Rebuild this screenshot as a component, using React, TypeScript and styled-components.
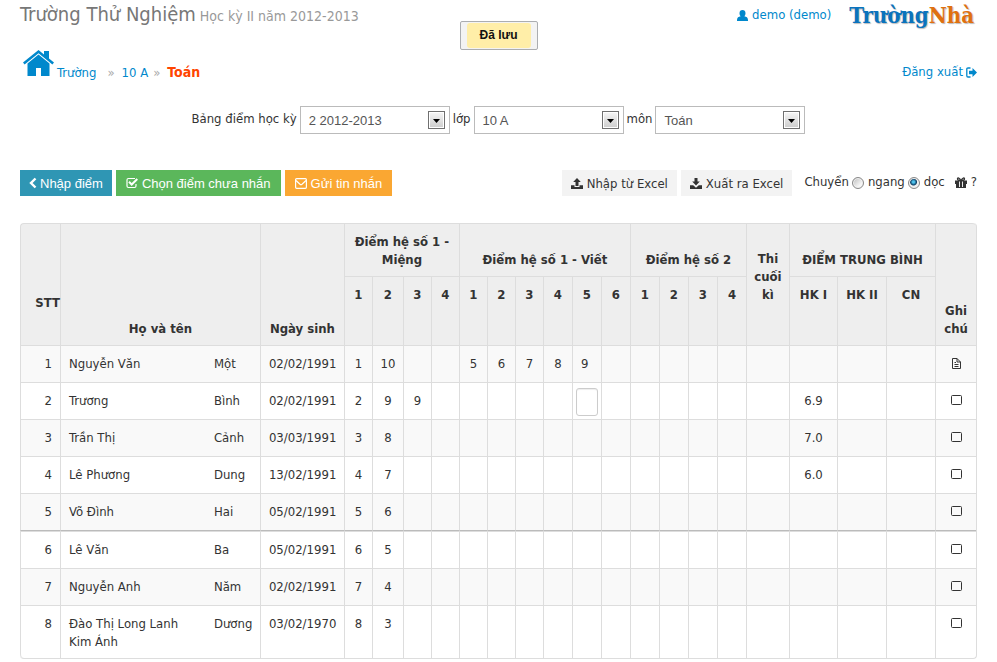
import React, { useId } from "react";
import styled, { createGlobalStyle, css } from "styled-components";

const UI = `"DejaVu Sans Condensed", "Noto Sans", sans-serif`;
const ARIAL = `"Liberation Sans", sans-serif`;

const GlobalStyle = createGlobalStyle`
  * { box-sizing: border-box; }
  body {
    margin: 0;
    background: #fff;
    color: #333;
    font: 13px/18px ${UI};
  }
`;

const Page = styled.div`
  position: relative;
  padding: 0 20px 3px;
`;

const Header = styled.header`
  display: flex;
  justify-content: space-between;
  align-items: flex-start;
  height: 46px;
`;

const Title = styled.h1`
  margin: 0;
  font-size: 20px;
  font-weight: 400;
  line-height: 28px;
  color: #777;
  white-space: nowrap;
`;

const Term = styled.small`
  margin-left: 4px;
  font-size: 14px;
  color: #999;
`;

const Account = styled.div`
  display: flex;
  align-items: center;
  gap: 18px;
  height: 30px;
  padding-right: 3px;
`;

const Link = styled.a`
  display: inline-flex;
  align-items: center;
  gap: 4px;
  color: #0088cc;
  text-decoration: none;
`;

const Logo = styled.a`
  font: bold 22px/28px "DejaVu Serif Condensed", "Liberation Serif", serif;
  color: #0a73bd;
  text-decoration: none;
  text-shadow: 1px 1px 1px #bbb;
  span { color: #e0700f; }
`;

const Toast = styled.div`
  position: absolute;
  top: 21px;
  left: 50%;
  transform: translateX(-50%);
  padding: 1px 6px;
  border: 1px solid #abadb0;
  border-radius: 2px;
  background: #f3f3f3;
`;

const ToastText = styled.div`
  width: 64px;
  border-radius: 3px;
  background: #ffeea8;
  color: #111;
  text-align: center;
  font: bold 12px/25px ${ARIAL};
`;

const NavRow = styled.div`
  display: flex;
  justify-content: space-between;
  height: 60px;
`;

const Crumbs = styled.nav`
  display: flex;
  align-items: flex-start;
  padding: 4px 0 0 3px;
  line-height: 18px;
`;

const Home = styled(Link)`
  margin-right: 3px;
`;

const Crumb = styled(Link)`
  margin-top: 14px;
`;

const Separator = styled.span`
  margin: 14px 7px 0 11px;
  color: #aaa;
  &:last-of-type { margin-left: 5px; margin-right: 7px; }
`;

const Current = styled.strong`
  margin-top: 13px;
  font-size: 14px;
  color: #ff4500;
`;

const SignOut = styled(Link)`
  align-self: flex-start;
  margin-top: 17px;
  gap: 3px;
`;

const Filters = styled.form`
  display: flex;
  justify-content: center;
  gap: 3px;
  height: 28px;
`;

const FilterLabel = styled.label`
  display: flex;
  gap: 3px;
  line-height: 26px;
`;

const SelectBox = styled.span`
  display: grid;
  width: 150px;
  height: 28px;
  > * { grid-area: 1 / 1; }
`;

const Select = styled.select`
  appearance: none;
  height: 28px;
  padding: 0 24px 0 8px;
  border: 1px solid #bbb;
  border-radius: 0;
  background: #fff;
  color: #555;
  font: 13px ${ARIAL};
`;

const Arrow = styled.svg`
  justify-self: end;
  align-self: center;
  margin-right: 5px;
  pointer-events: none;
`;

const Toolbar = styled.div`
  display: flex;
  justify-content: space-between;
  margin: 36px 0 27px;
  height: 26px;
`;

const Group = styled.div`
  display: flex;
  gap: 4px;
`;

const Button = styled.button<{ $bg: string; $plain?: boolean }>`
  display: flex;
  align-items: center;
  justify-content: center;
  gap: 4px;
  padding: 0 ${(p) => (p.$plain ? 9 : 10)}px;
  border: 0;
  background: ${(p) => p.$bg};
  color: ${(p) => (p.$plain ? "#333" : "#fff")};
  font: 13px ${(p) => (p.$plain ? UI : ARIAL)};
  white-space: nowrap;
`;

const BackButton = styled(Button)`
  gap: 3px;
  padding: 0 9px;
`;

const Direction = styled.fieldset`
  display: flex;
  align-items: center;
  height: 24px;
  margin: 0 0 0 8px;
  padding: 0;
  border: 0;
`;

const RadioLabel = styled.label`
  display: flex;
  align-items: center;
  gap: 4px;
  margin-left: 3px;
`;

const Radio = styled.input`
  appearance: none;
  width: 12px;
  height: 12px;
  margin: 2px 0 0;
  border: 1px solid #888;
  border-radius: 50%;
  background: linear-gradient(135deg, #bbb, #f6f6f6 70%);
  box-shadow: inset 0 0 0 1px #f2f2f2;
  &:checked {
    background: radial-gradient(circle at 45% 40%, #4fc4ee 0 1px, #0d3f66 3px, #eee 4px);
  }
`;

const Help = styled.a`
  display: flex;
  align-items: center;
  gap: 4px;
  margin-left: 10px;
  color: #333;
  text-decoration: none;
`;

const Grid = styled.table`
  width: 100%;
  table-layout: fixed;
  border-collapse: separate;
  border-spacing: 0;
  border: 1px solid #ddd;
  border-left: 0;
  border-top: 0;
  border-radius: 4px;
`;

const Col = styled.col<{ $w?: number }>`
  ${(p) => p.$w && css`width: ${p.$w}px;`}
`;

const Th = styled.th<{ $pb?: number; $top?: boolean; $h?: number }>`
  height: ${(p) => p.$h ?? 53}px;
  padding: 9px 8px ${(p) => p.$pb ?? 7}px;
  border-left: 1px solid #ddd;
  border-top: 1px solid #ddd;
  background: #eee;
  vertical-align: ${(p) => (p.$top ? "top" : "bottom")};
  text-align: center;
  &.stt {
    padding-right: 0;
    padding-left: 0;
    text-align: right;
    border-top-left-radius: 4px;
  }
  &.note { border-top-right-radius: 4px; }
  &.group { padding-left: 4px; padding-right: 4px; }
  &.term { padding-left: 2px; padding-right: 2px; white-space: nowrap; }
  &.slot { padding-left: 0; padding-right: 0; }
`;

const Row = styled.tr<{ $mark?: boolean }>`
  > td {
    height: ${(p) => (p.$mark ? 38 : 37)}px;
    ${(p) => p.$mark && css`border-bottom: 1px solid #bbb;`}
  }
  &:nth-child(odd) > td { background: #f9f9f9; }
  &:last-child > td:first-child { border-bottom-left-radius: 4px; }
  &:last-child > td:last-child { border-bottom-right-radius: 4px; }
`;

const Td = styled.td<{ $align?: string; $joined?: boolean }>`
  padding: 9px 8px 7px;
  border-top: 1px solid #ddd;
  border-left: ${(p) => (p.$joined ? "0" : "1px solid #ddd")};
  text-align: ${(p) => p.$align ?? "left"};
  vertical-align: top;
`;

const DateTd = styled(Td)`
  white-space: nowrap;
  padding-right: 0;
`;

const ScoreTd = styled(Td)<{ $editing?: boolean }>`
  padding: ${(p) => (p.$editing ? "5px 3px 3px" : "9px 0 7px")};
`;

const ActiveTd = styled(Td)`
  padding-right: 0;
`;

const ScoreInput = styled.input`
  display: block;
  width: 22px;
  height: 28px;
  padding: 2px;
  border: 1px solid #ccc;
  border-radius: 3px;
  background: #fff;
  box-shadow: inset 0 1px 1px #eee;
  font: 13px ${UI};
`;

const NoteButton = styled.button`
  display: block;
  margin: 3px auto 0;
  padding: 0;
  border: 0;
  background: none;
  line-height: 0;
`;

const HomeIcon = () => (
  <svg width="31" height="28" viewBox="0 0 31 28" fill="#0088cc" aria-hidden="true">
    <path d="M15.5 0 0 12.600 1.600 14.500 15.500 3.200l13.900 11.300L31 12.600l-5-4.100V1h-5v3.500z" />
    <path d="M15.500 4.600 4.500 13.600V26h8.500v-8h5v8h8.500V13.600z" />
  </svg>
);
const UserIcon = () => (
  <svg width="11" height="11" viewBox="0 0 11 11" fill="currentColor" aria-hidden="true">
    <path d="M5.500 0C3.700 0 2.500 1.200 2.500 3.200c0 1.300.5 2.400 1.200 3.100C1.500 6.700 0 7.500 0 10v1h11v-1C11 7.500 9.500 6.700 7.300 6.300 8 5.600 8.500 4.500 8.500 3.200 8.500 1.200 7.300 0 5.500 0z" />
  </svg>
);
const ExitIcon = () => (
  <svg width="11" height="11" viewBox="0 0 11 11" aria-hidden="true">
    <path d="M4.500 1H2Q.8 1 .8 2.200v6.600Q.8 10 2 10h2.500" fill="none" stroke="currentColor" strokeWidth="1.300" />
    <path d="M6.500 1 11 5.500 6.500 10V7.200H3V3.800h3.500z" fill="currentColor" />
  </svg>
);
const ChevronIcon = () => (
  <svg width="8" height="12" viewBox="0 0 8 12" aria-hidden="true">
    <path d="M6.500 1.500 2 6l4.500 4.500" fill="none" stroke="currentColor" strokeWidth="2.400" />
  </svg>
);
const CheckIcon = () => (
  <svg width="12" height="12" viewBox="0 0 12 12" fill="none" stroke="currentColor" aria-hidden="true">
    <path d="M9 1.500H2.500Q1 1.500 1 3v6q0 1.500 1.500 1.500h6Q10 10.500 10 9V7" strokeWidth="1.200" />
    <path d="M3 4.800 5.700 7.500 11.300 2" strokeWidth="2" />
  </svg>
);
const MailIcon = () => (
  <svg width="12" height="11" viewBox="0 0 12 11" fill="none" stroke="currentColor" strokeWidth="1.200" aria-hidden="true">
    <rect x=".6" y=".7" width="10.800" height="9.600" rx="1" />
    <path d="M1 2.500 5 6.300q1 .8 2 0L11 2.500" />
  </svg>
);
const UploadIcon = () => (
  <svg width="12" height="11" viewBox="0 0 12 11" fill="currentColor" aria-hidden="true">
    <path d="M6 0 9.800 4H7.500v4h-3V4H2.200z" />
    <path d="M0 7.300h3.500V9h5V7.300H12V11H0z" />
  </svg>
);
const DownloadIcon = () => (
  <svg width="12" height="11" viewBox="0 0 12 11" fill="currentColor" aria-hidden="true">
    <path d="M4.500 0h3v3.500h2.300L6 7.500 2.200 3.500h2.300z" />
    <path d="M0 7.300h3.200L6 9.800l2.800-2.500H12V11H0z" />
  </svg>
);
const GiftIcon = () => (
  <svg width="12" height="11" viewBox="0 0 12 11" aria-hidden="true">
    <path d="M0 3.500h12V7h-1v4H1V7H0z" fill="#333" />
    <path d="M6 3.500C4.500.7 2.500.3 2.500 1.900 2.500 3.500 4.500 3.500 6 3.500zm0 0C7.500.7 9.500.3 9.500 1.900 9.500 3.500 7.500 3.500 6 3.500z" fill="none" stroke="#333" strokeWidth="1.300" />
    <path d="M4.500 4.500V10M7.500 4.500V10" stroke="#fff" strokeWidth=".9" />
  </svg>
);
const FileIcon = () => (
  <svg width="9" height="11" viewBox="0 0 9 11" fill="none" stroke="#333" aria-hidden="true">
    <path d="M.5.5H5L8.500 4v6.500h-8zM5 .5V4h3.500M2.500 6.500h4M2.500 8.500h4M2.500 4.500H4" />
  </svg>
);
const SquareIcon = () => (
  <svg width="11" height="10" viewBox="0 0 11 10" fill="none" stroke="#333" aria-hidden="true">
    <rect x=".5" y=".5" width="10" height="9" rx="1" />
  </svg>
);

const Picker = ({ label, value }: { label: string; value: string }) => {
  const face = useId();
  return (
    <FilterLabel>
      {label}
      <SelectBox>
        <Select defaultValue={value}>
          <option>{value}</option>
        </Select>
        <Arrow width="17" height="18" viewBox="0 0 17 18" aria-hidden="true">
          <defs>
            <linearGradient id={face} x1="0" y1="0" x2="0" y2="1">
              <stop offset="0" stopColor="#f4f4f4" />
              <stop offset="1" stopColor="#cfcfcf" />
            </linearGradient>
          </defs>
          <rect x=".5" y=".5" width="16" height="17" fill="#fff" stroke="#707070" />
          <rect x="2" y="2" width="13" height="14" fill={`url(#${face})`} />
          <path d="M5 8h7L8.500 12z" fill="#000" />
        </Arrow>
      </SelectBox>
    </FilterLabel>
  );
};

const columns: (number | undefined)[] = [
  40, undefined, 54, 84, 28, 31, 28, 28, 28, 28, 28, 29, 29, 29, 29, 29, 29, 29, 43, 48, 49, 49, 41,
];

const slots = ["1", "2", "3", "4", "1", "2", "3", "4", "5", "6", "1", "2", "3", "4"];
const SCORE_COUNT = 18;
const ACTIVE = 8;

type Student = { family: string; given: string; born: string; scores: Record<number, string>; note?: boolean };

const students: Student[] = [
  { family: "Nguyễn Văn", given: "Một", born: "02/02/1991", scores: { 0: "1", 1: "10", 4: "5", 5: "6", 6: "7", 7: "8", 8: "9" }, note: true },
  { family: "Trương", given: "Bình", born: "02/02/1991", scores: { 0: "2", 1: "9", 2: "9", 15: "6.9" } },
  { family: "Trần Thị", given: "Cảnh", born: "03/03/1991", scores: { 0: "3", 1: "8", 15: "7.0" } },
  { family: "Lê Phương", given: "Dung", born: "13/02/1991", scores: { 0: "4", 1: "7", 15: "6.0" } },
  { family: "Võ Đình", given: "Hai", born: "05/02/1991", scores: { 0: "5", 1: "6" } },
  { family: "Lê Văn", given: "Ba", born: "05/02/1991", scores: { 0: "6", 1: "5" } },
  { family: "Nguyễn Anh", given: "Năm", born: "02/02/1991", scores: { 0: "7", 1: "4" } },
  { family: "Đào Thị Long Lanh Kim Ánh", given: "Dương", born: "03/02/1970", scores: { 0: "8", 1: "3" } },
];

const StudentRow = ({ s, index }: { s: Student; index: number }) => (
  <Row $mark={index === 4}>
    <Td $align="right">{index + 1}</Td>
    <Td>{s.family}</Td>
    <Td $joined>{s.given}</Td>
    <DateTd>{s.born}</DateTd>
    {Array.from({ length: SCORE_COUNT }, (_, i) => {
      if (i === ACTIVE && index === 1) {
        return (
          <ScoreTd key={i} $editing>
            <ScoreInput aria-label="Điểm" />
          </ScoreTd>
        );
      }
      if (i === ACTIVE) return <ActiveTd key={i}>{s.scores[i]}</ActiveTd>;
      return (
        <ScoreTd key={i} $align="center">
          {s.scores[i]}
        </ScoreTd>
      );
    })}
    <Td>
      <NoteButton type="button" aria-label="Ghi chú">
        {s.note ? <FileIcon /> : <SquareIcon />}
      </NoteButton>
    </Td>
  </Row>
);

export default function App() {
  return (
    <>
      <GlobalStyle />
      <Page>
        <Header>
          <Title>
            Trường Thử Nghiệm<Term>Học kỳ II năm 2012-2013</Term>
          </Title>
          <Account>
            <Link href="#"><UserIcon />demo (demo)</Link>
            <Logo href="#">Trường<span>Nhà</span></Logo>
          </Account>
        </Header>
        <Toast role="status">
          <ToastText>Đã lưu</ToastText>
        </Toast>
        <NavRow>
          <Crumbs>
            <Home href="#" aria-label="Trang chủ"><HomeIcon /></Home>
            <Crumb href="#">Trường</Crumb>
            <Separator>»</Separator>
            <Crumb href="#">10 A</Crumb>
            <Separator>»</Separator>
            <Current>Toán</Current>
          </Crumbs>
          <SignOut href="#">Đăng xuất<ExitIcon /></SignOut>
        </NavRow>
        <Filters>
          <Picker label="Bảng điểm học kỳ" value="2 2012-2013" />
          <Picker label="lớp" value="10 A" />
          <Picker label="môn" value="Toán" />
        </Filters>
        <Toolbar>
          <Group>
            <BackButton type="button" $bg="#2f96b4"><ChevronIcon />Nhập điểm</BackButton>
            <Button type="button" $bg="#5bb75b"><CheckIcon />Chọn điểm chưa nhắn</Button>
            <Button type="button" $bg="#faa732"><MailIcon />Gửi tin nhắn</Button>
          </Group>
          <Group>
            <Button type="button" $plain $bg="#f3f3f3"><UploadIcon />Nhập từ Excel</Button>
            <Button type="button" $plain $bg="#f3f3f3"><DownloadIcon />Xuất ra Excel</Button>
            <Direction>
              Chuyển
              <RadioLabel><Radio type="radio" name="dir" />ngang</RadioLabel>
              <RadioLabel><Radio type="radio" name="dir" defaultChecked />dọc</RadioLabel>
              <Help href="#"><GiftIcon />?</Help>
            </Direction>
          </Group>
        </Toolbar>
        <Grid>
          <colgroup>
            {columns.map((w, i) => <Col key={i} $w={w} />)}
          </colgroup>
          <thead>
            <tr>
              <Th className="stt" rowSpan={2} $pb={33}>STT</Th>
              <Th rowSpan={2} colSpan={2}>Họ và tên</Th>
              <Th className="slot" rowSpan={2}>Ngày sinh</Th>
              <Th colSpan={4}>Điểm hệ số 1 - Miệng</Th>
              <Th className="group" colSpan={6}>Điểm hệ số 1 - Viết</Th>
              <Th className="group" colSpan={4}>Điểm hệ số 2</Th>
              <Th className="term" rowSpan={2} $pb={41}>Thi<br />cuối<br />kì</Th>
              <Th className="group" colSpan={3}>ĐIỂM TRUNG BÌNH</Th>
              <Th className="note" rowSpan={2}>Ghi chú</Th>
            </tr>
            <tr>
              {slots.map((n, i) => <Th key={i} className="slot" $top $h={69}>{n}</Th>)}
              <Th className="term" $top $h={69}>HK I</Th>
              <Th className="term" $top $h={69}>HK II</Th>
              <Th className="term" $top $h={69}>CN</Th>
            </tr>
          </thead>
          <tbody>
            {students.map((s, i) => <StudentRow key={s.born + i} s={s} index={i} />)}
          </tbody>
        </Grid>
      </Page>
    </>
  );
}
